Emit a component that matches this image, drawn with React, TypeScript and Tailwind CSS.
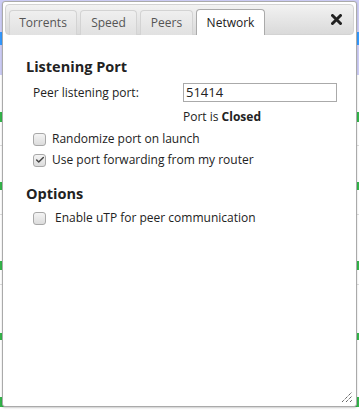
import { Check } from "lucide-react";

function Checkbox({ checked }: { checked?: boolean }) {
  return (
    <span className="flex h-[13px] w-[13px] shrink-0 items-center justify-center rounded-[3px] border border-[#a8a8a8] bg-gradient-to-b from-[#f4f4f4] to-[#dcdcdc]">
      {checked ? <Check size={10} strokeWidth={3.5} className="text-[#444]" /> : null}
    </span>
  );
}

const tabs = [
  { label: "Torrents", w: "w-[68px]" },
  { label: "Speed", w: "w-[57px]" },
  { label: "Peers", w: "w-[53px]" },
];

export default function App() {
  return (
    <div className="relative h-[410px] w-[359px] overflow-hidden bg-white" style={{ fontFamily: "'Open Sans', 'DejaVu Sans', sans-serif" }}>
      {/* torrent list behind the dialog */}
      <div className="flex flex-col">
        <div className="flex h-[75px] flex-col bg-[#ccccf5] pt-[32px]">
          <div className="h-[13px] bg-[#3399ff]" />
        </div>
        <div className="h-[37px]" />
        <div className="h-[10px] bg-[#33b54a]" />
        <div className="h-[24px] border-b border-[#dddddd]" />
        <div className="h-[36px]" />
        <div className="h-[8px] bg-[#33b54a]" />
        <div className="h-[25px] border-b border-[#dddddd]" />
        <div className="h-[46px]" />
        <div className="h-[9px] bg-[#33b54a]" />
        <div className="h-[15px] border-b border-[#dddddd]" />
        <div className="h-[48px]" />
        <div className="h-[7px] bg-[#33b54a]" />
        <div className="h-[57px]" />
        <div className="h-[10px] bg-[#33b54a]" />
      </div>

      {/* dialog */}
      <div className="absolute left-[2px] top-[1px] flex h-[406px] w-[355px] flex-col rounded-[3px] border border-[#aaaaaa] bg-white p-[2px] shadow-[0_1px_2px_rgba(0,0,0,0.2)]">
        <div className="flex h-[31px] items-end rounded-[4px] border border-[#d3d3d3] bg-gradient-to-b from-[#f2f2f2] to-[#dadada] pl-[3px] pr-[11px]">
          <div className="flex items-end gap-[3px]">
            {tabs.map((t) => (
              <div
                key={t.label}
                className={`${t.w} mb-[-1px] flex h-[25px] items-center justify-center rounded-t-[4px] border border-b-0 border-[#d3d3d3] bg-gradient-to-b from-[#efefef] to-[#e1e1e1] text-[12px] text-[#555555]`}
              >
                {t.label}
              </div>
            ))}
            <div className="mb-[-1px] flex h-[26px] w-[69px] items-center justify-center rounded-t-[4px] border border-b-0 border-[#aaaaaa] bg-white text-[12px] text-[#212121]">
              Network
            </div>
          </div>
          <div className="ml-auto flex h-[29px] items-center">
            <svg width="11" height="11" viewBox="0 0 11 11">
              <path d="M1.5 1.5 L9.5 9.5 M9.5 1.5 L1.5 9.5" stroke="#222" strokeWidth="3" strokeLinecap="round" />
            </svg>
          </div>
        </div>

        <div className="flex flex-1 flex-col pl-[21px] pt-[22px] text-[12px] text-[#222222]">
          <h2 className="text-[14.5px] font-bold leading-[20px]">Listening Port</h2>
          <div className="mt-[6px] flex items-center pl-[7px]">
            <span className="w-[150px]">Peer listening port:</span>
            <input
              defaultValue="51414"
              className="h-[19px] w-[154px] border border-[#aaaaaa] px-[2px] text-[13px] text-[#222222] outline-none"
            />
          </div>
          <div className="mt-[6px] pl-[157px] leading-[18px]">
            Port is <b>Closed</b>
          </div>
          <div className="mt-[4px] flex flex-col gap-[3px] pl-[7px]">
            <label className="flex h-[18px] items-center gap-[6px]">
              <Checkbox />
              <span>Randomize port on launch</span>
            </label>
            <label className="flex h-[18px] items-center gap-[6px]">
              <Checkbox checked />
              <span>Use port forwarding from my router</span>
            </label>
          </div>
          <h2 className="mt-[15px] text-[14.5px] font-bold leading-[20px]">Options</h2>
          <label className="mt-[5px] flex h-[18px] items-center gap-[9px] pl-[7px]">
            <Checkbox />
            <span>Enable uTP for peer communication</span>
          </label>
        </div>

        <div className="flex justify-end pb-[1px] pr-[1px]">
          <svg width="12" height="12" viewBox="0 0 12 12">
            <path d="M1 11 L11 1 M5 11 L11 5 M9 11 L11 9" stroke="#222" strokeWidth="1" strokeDasharray="1 1" />
          </svg>
        </div>
      </div>
    </div>
  );
}
